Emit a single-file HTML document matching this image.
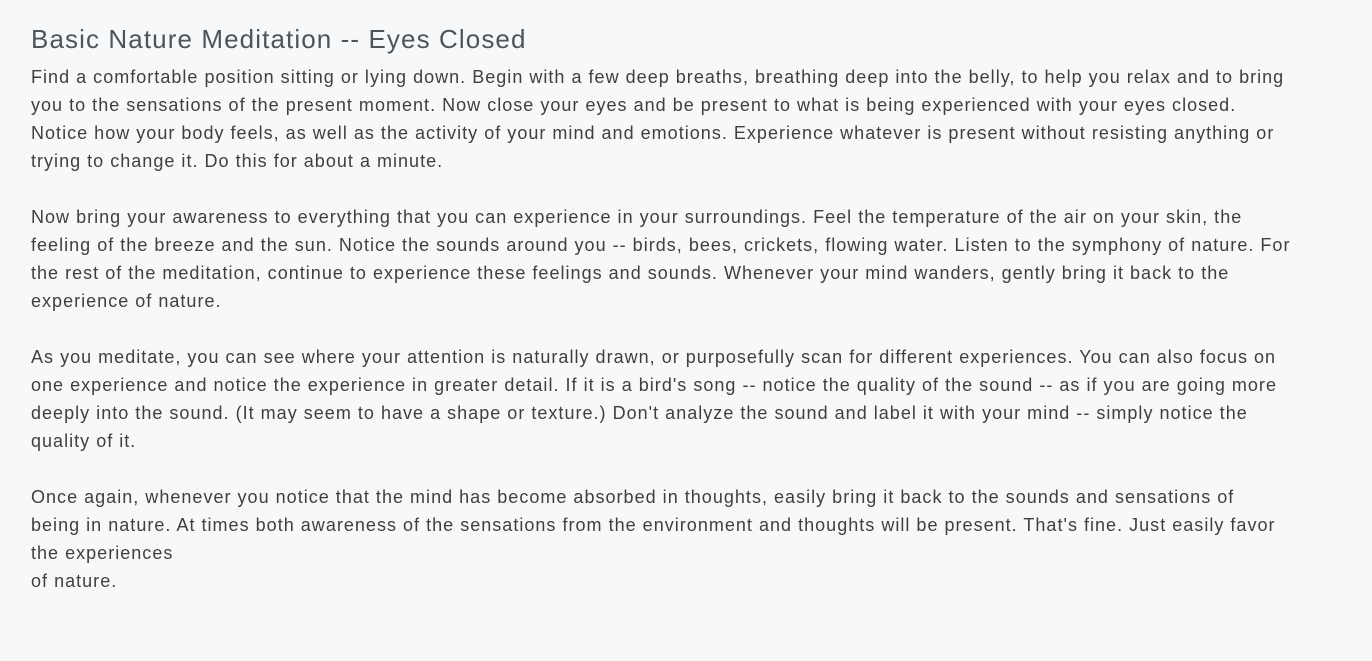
<!DOCTYPE html>
<html><head><meta charset="utf-8"><style>
html,body{margin:0;padding:0;background:#f6f8f9;width:1372px;height:661px;overflow:hidden}
body{font-family:"Liberation Sans",sans-serif;color:#3f3f3f}
h1{position:absolute;left:31px;top:22px;margin:0;font-weight:normal;font-size:26px;color:#4f5458;letter-spacing:1.1px;line-height:34px}
.c{position:absolute;left:31px;top:63px;font-size:18px;line-height:28px;white-space:nowrap;letter-spacing:1.02px}
p{margin:0 0 28px 0}
</style></head><body>
<h1>Basic Nature Meditation -- Eyes Closed</h1>
<div class="c">
<p>Find a comfortable position sitting or lying down. Begin with a few deep breaths, breathing deep into the belly, to help you relax and to bring<br>you to the sensations of the present moment. Now close your eyes and be present to what is being experienced with your eyes closed.<br>Notice how your body feels, as well as the activity of your mind and emotions. Experience whatever is present without resisting anything or<br>trying to change it. Do this for about a minute.</p>
<p>Now bring your awareness to everything that you can experience in your surroundings. Feel the temperature of the air on your skin, the<br>feeling of the breeze and the sun. Notice the sounds around you -- birds, bees, crickets, flowing water. Listen to the symphony of nature. For<br>the rest of the meditation, continue to experience these feelings and sounds. Whenever your mind wanders, gently bring it back to the<br>experience of nature.</p>
<p>As you meditate, you can see where your attention is naturally drawn, or purposefully scan for different experiences. You can also focus on<br>one experience and notice the experience in greater detail. If it is a bird's song -- notice the quality of the sound -- as if you are going more<br>deeply into the sound. (It may seem to have a shape or texture.) Don't analyze the sound and label it with your mind -- simply notice the<br>quality of it.</p>
<p>Once again, whenever you notice that the mind has become absorbed in thoughts, easily bring it back to the sounds and sensations of<br>being in nature. At times both awareness of the sensations from the environment and thoughts will be present. That's fine. Just easily favor<br>the experiences<br>of nature.</p>
</div>
</body></html>
